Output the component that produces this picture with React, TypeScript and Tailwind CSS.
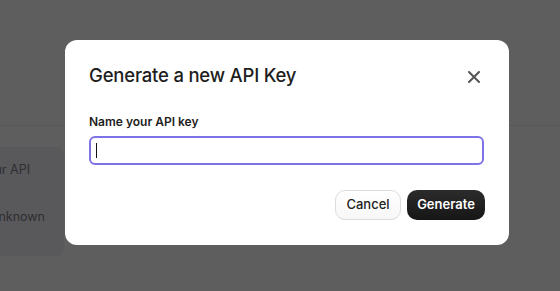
import React from "react";

export default function App() {
  return (
    <div
      className="relative w-[560px] h-[291px] overflow-hidden bg-[#5e5e5e]"
      style={{ fontFamily: "Inter, 'Liberation Sans', sans-serif" }}
    >
      {/* dimmed page behind */}
      <div className="flex flex-col">
        <div className="h-[126px] border-b border-[#575757]" />
        <div className="mt-[21px] ml-[-120px] w-[184px] h-[109px] rounded-[8px] bg-[#59595c] flex flex-col items-end pr-[34px] pt-[15px] text-[12.5px] text-[#2e2e31]">
          <div className="w-[64px] text-right leading-[16px]">Your API</div>
          <div className="w-[64px] text-right leading-[16px] mt-[31px] pr-0">
            <span className="mr-[-15px]">Unknown</span>
          </div>
        </div>
      </div>

      {/* modal */}
      <div className="absolute left-[65px] top-[40px] w-[444px] h-[205px] rounded-[12px] bg-white px-[24px] pt-[22px] pb-[25px] flex flex-col">
        <div className="flex items-center justify-between h-[28px]">
          <h2 className="text-[18.5px] font-medium text-[#1e1e1e] tracking-[-0.2px]">
            Generate a new API Key
          </h2>
          <svg
            width="12"
            height="12"
            viewBox="0 0 12 12"
            className="mr-[5px] mt-[2px]"
          >
            <path
              d="M1 1 L11 11 M11 1 L1 11"
              stroke="#555"
              strokeWidth="2"
              strokeLinecap="round"
            />
          </svg>
        </div>
        <label className="mt-[24px] text-[12px] font-semibold text-[#1e1e1e] leading-[16px]">
          Name your API key
        </label>
        <div className="mt-[6px] h-[29px] w-[395px] rounded-[6px] border-2 border-[#7d72e6] flex items-center pl-[5px]">
          <div className="w-[1px] h-[15px] bg-[#111]" />
        </div>
        <div className="mt-auto flex justify-end gap-[6px]">
          <button className="h-[30px] w-[66px] rounded-[10px] border border-[#dcdcdc] bg-gradient-to-b from-white to-[#f7f7f7] text-[13px] font-medium text-[#222]">
            Cancel
          </button>
          <button className="h-[30px] w-[78px] rounded-[10px] bg-gradient-to-b from-[#2c2c2c] to-[#161616] text-[13px] font-semibold text-white">
            Generate
          </button>
        </div>
      </div>
    </div>
  );
}
